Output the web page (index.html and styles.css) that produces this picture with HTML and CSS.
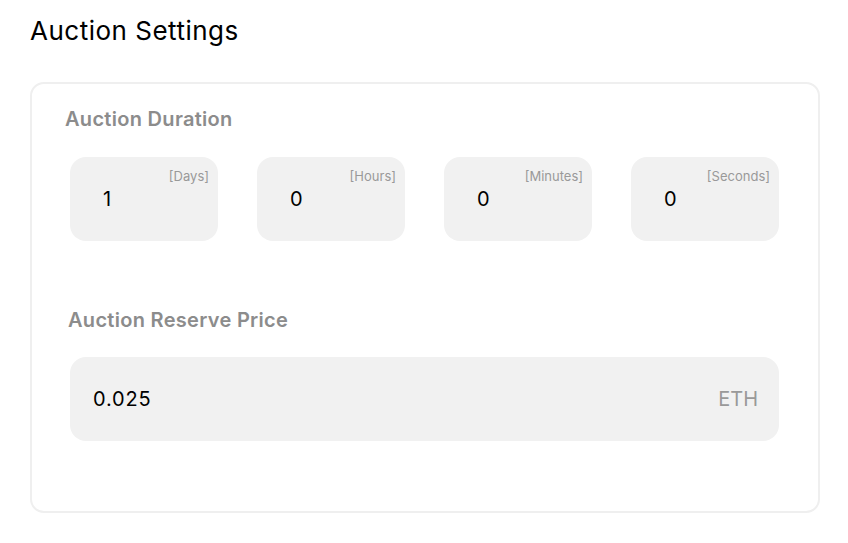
FILE: index.html
```html
<!DOCTYPE html>
<html>
<head>
<meta charset="utf-8">
<link rel="stylesheet" href="styles.css">
</head>
<body>
<div class="page">
  <h1 class="title">Auction Settings</h1>
  <div class="card">
    <div class="section-label duration-label">Auction Duration</div>
    <div class="duration-row">
      <div class="field">
        <span class="unit">[Days]</span>
        <span class="value">1</span>
      </div>
      <div class="field">
        <span class="unit">[Hours]</span>
        <span class="value">0</span>
      </div>
      <div class="field">
        <span class="unit">[Minutes]</span>
        <span class="value">0</span>
      </div>
      <div class="field">
        <span class="unit">[Seconds]</span>
        <span class="value">0</span>
      </div>
    </div>
    <div class="section-label reserve-label">Auction Reserve Price</div>
    <div class="price-field">
      <span class="price-value">0.025</span>
      <span class="currency">ETH</span>
    </div>
  </div>
</div>
</body>
</html>
```
FILE: styles.css
```css
* { box-sizing: border-box; }
html, body { margin: 0; padding: 0; background: #fff; }
body { font-family: "Inter", "Noto Sans", sans-serif; color: #000; }
.page { padding: 14px 29px 0 30px; }
.title {
  margin: 0;
  font-size: 26px;
  font-weight: 400;
  line-height: 34px;
  letter-spacing: 0.5px;
}
.card {
  margin-top: 34px;
  width: 790px;
  height: 431px;
  border: 2px solid #efefef;
  border-radius: 14px;
  padding: 22px 39px 0 38px;
}
.section-label {
  font-size: 20px;
  font-weight: 600;
  color: #8c8c8c;
  line-height: 26px;
  letter-spacing: 0.3px;
}
.duration-label { margin-left: -5px; }
.reserve-label { margin-left: -2px; margin-top: 66px; }
.duration-row {
  margin-top: 25px;
  display: grid;
  grid-template-columns: repeat(4, 148px);
  justify-content: space-between;
}
.field {
  position: relative;
  height: 84px;
  background: #f1f1f1;
  border-radius: 16px;
}
.unit {
  position: absolute;
  top: 11px;
  right: 9px;
  font-size: 13px;
  color: #999;
  line-height: 16px;
}
.value {
  position: absolute;
  left: 33px;
  top: 30px;
  font-size: 20px;
  line-height: 24px;
  letter-spacing: 0.8px;
}
.price-field {
  margin-top: 24px;
  height: 84px;
  background: #f1f1f1;
  border-radius: 16px;
  display: flex;
  align-items: center;
  justify-content: space-between;
  padding: 0 21px 0 23px;
  font-size: 20px;
}
.price-value { color: #000; letter-spacing: 0.8px; }
.currency { color: #999; }
```
